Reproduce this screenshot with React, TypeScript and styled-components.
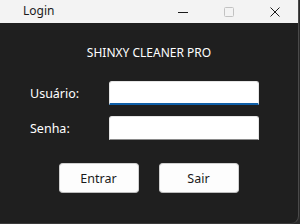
import styled, { createGlobalStyle } from "styled-components";

const GlobalStyle = createGlobalStyle`
	html, body {
		margin: 0;
		padding: 0;
		background: #2a2a2a;
	}
	body {
		font-family: "Noto Sans", "Open Sans", sans-serif;
	}
`;

const Window = styled.div`
	width: 298px;
	height: 223px;
	display: flex;
	flex-direction: column;
	background: #1f1f1f;
	border-right: 1px solid #4a4a4a;
	border-bottom: 1px solid #3a3a3a;
	border-bottom-right-radius: 8px;
	overflow: hidden;
`;

const TitleBar = styled.div`
	height: 23px;
	flex: none;
	display: flex;
	align-items: center;
	background: #f3f3f3;
	color: #1a1a1a;
	font-size: 12px;
`;

const Title = styled.span`
	flex: 1;
	padding-left: 23px;
	line-height: 23px;
	margin-top: -2px;
`;

const Caption = styled.div`
	width: 46px;
	height: 23px;
	display: flex;
	align-items: center;
	justify-content: center;
`;

const Body = styled.div`
	flex: 1;
	display: flex;
	flex-direction: column;
	padding-top: 22px;
`;

const Heading = styled.div`
	color: #ffffff;
	font-size: 12px;
	line-height: 16px;
	text-align: center;
	margin-bottom: 20px;
`;

const Fields = styled.div`
	display: grid;
	grid-template-columns: 79px 150px;
	row-gap: 11px;
	padding-left: 30px;
	align-items: center;
`;

const Label = styled.label`
	color: #ffffff;
	font-size: 12.5px;
`;

const Input = styled.input<{ $focused?: boolean }>`
	box-sizing: border-box;
	width: 150px;
	height: 24px;
	margin: 0;
	border: 1px solid #e5e5e5;
	border-bottom: ${(p) => (p.$focused ? "2px solid #0f5fa8" : "1px solid #8a8a8a")};
	border-radius: 3px 3px 0 0;
	background: #ffffff;
	outline: none;
	padding: 0 6px;
	font-family: inherit;
	font-size: 12px;
`;

const Buttons = styled.div`
	display: flex;
	justify-content: center;
	gap: 20px;
	margin-top: 23px;
	padding-right: 1px;
`;

const Button = styled.button`
	box-sizing: border-box;
	width: 80px;
	height: 30px;
	background: #fdfdfd;
	border: 1px solid #d0d0d0;
	border-bottom-color: #bcbcbc;
	border-radius: 4px;
	color: #1a1a1a;
	font-family: inherit;
	font-size: 12.5px;
	padding: 0;
`;

export default function App() {
	return (
		<>
			<GlobalStyle />
			<Window>
				<TitleBar>
					<Title>Login</Title>
					<Caption>
						<svg width="10" height="10" viewBox="0 0 10 10">
							<path d="M0 5.5h10" stroke="#1a1a1a" strokeWidth="1" />
						</svg>
					</Caption>
					<Caption>
						<svg width="10" height="10" viewBox="0 0 10 10">
							<rect x="0.5" y="0.5" width="9" height="9" rx="1" fill="none" stroke="#c2c2c2" />
						</svg>
					</Caption>
					<Caption>
						<svg width="10" height="10" viewBox="0 0 10 10">
							<path d="M0.5 0.5l9 9M9.5 0.5l-9 9" stroke="#1a1a1a" strokeWidth="1" />
						</svg>
					</Caption>
				</TitleBar>
				<Body>
					<Heading>SHINXY CLEANER PRO</Heading>
					<Fields>
						<Label>Usuário:</Label>
						<Input $focused />
						<Label>Senha:</Label>
						<Input type="password" />
					</Fields>
					<Buttons>
						<Button>Entrar</Button>
						<Button>Sair</Button>
					</Buttons>
				</Body>
			</Window>
		</>
	);
}
